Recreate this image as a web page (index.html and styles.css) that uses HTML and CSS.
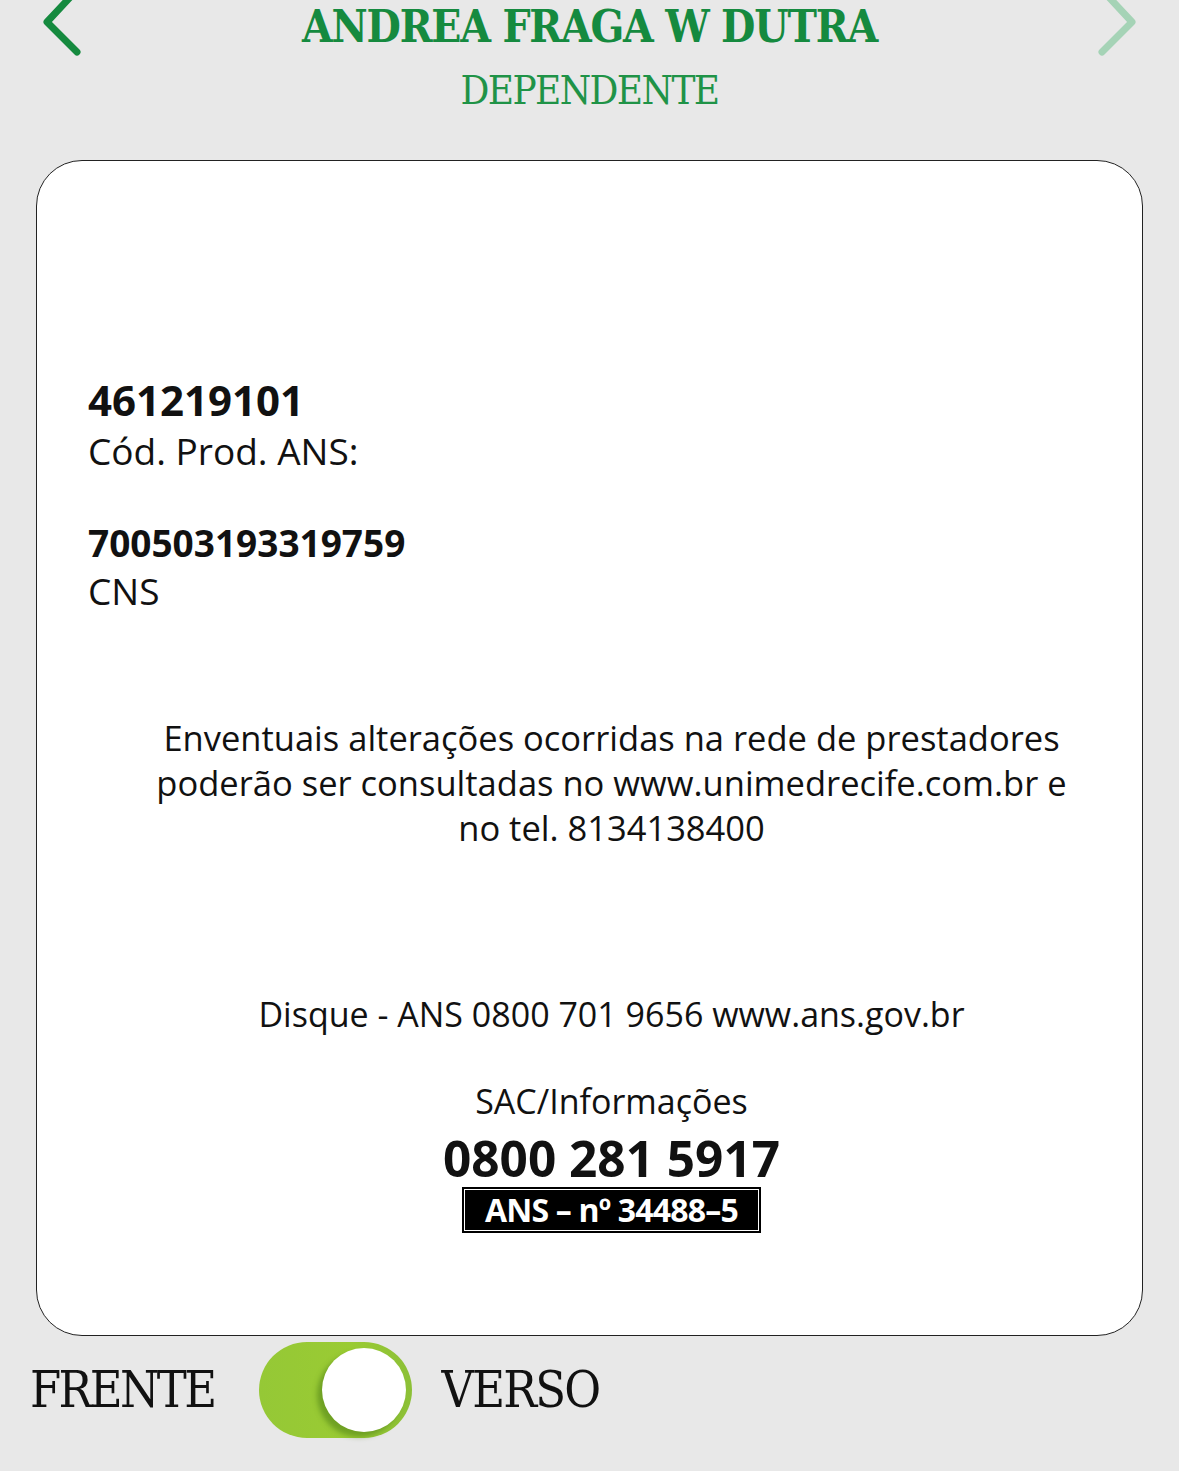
FILE: index.html
```html
<!DOCTYPE html>
<html lang="pt">
<head>
<meta charset="utf-8">
<link rel="stylesheet" href="styles.css">
</head>
<body>
<div class="screen">
  <header class="header">
    <svg class="chev chev-left" width="50" height="70" viewBox="0 0 50 70"><polyline points="35,0 7,30 37,60" fill="none" stroke="#158a3f" stroke-width="7" stroke-linecap="round" stroke-linejoin="round"/></svg>
    <div class="who">
      <h1 class="name">ANDREA FRAGA W DUTRA</h1>
      <div class="role">DEPENDENTE</div>
    </div>
    <svg class="chev chev-right" width="50" height="70" viewBox="0 0 50 70"><polyline points="15,0 43,30 13,60" fill="none" stroke="#a5d3b6" stroke-width="7" stroke-linecap="round" stroke-linejoin="round"/></svg>
  </header>

  <section class="card">
    <div class="field first">
      <div class="val big">461219101</div>
      <div class="lbl">Cód. Prod. ANS:</div>
    </div>
    <div class="field second">
      <div class="val">700503193319759</div>
      <div class="lbl">CNS</div>
    </div>
    <p class="notice">Enventuais alterações ocorridas na rede de prestadores poderão ser consultadas no www.unimedrecife.com.br e no tel. 8134138400</p>
    <p class="disque">Disque - ANS 0800 701 9656 www.ans.gov.br</p>
    <div class="sac">
      <div class="sac-lbl">SAC/Informações</div>
      <div class="sac-num">0800 281 5917</div>
      <div class="ans-box"><span>ANS – nº 34488–5</span></div>
    </div>
  </section>

  <div class="switch-row">
    <span class="side">FRENTE</span>
    <div class="toggle"><div class="knob"></div></div>
    <span class="side">VERSO</span>
  </div>
</div>
</body>
</html>
```

FILE: styles.css
```css
html, body {
  margin: 0;
  padding: 0;
  background: #e8e8e8;
}
.screen {
  width: 1179px;
  height: 1471px;
  overflow: hidden;
}
.header {
  display: flex;
  justify-content: space-between;
  align-items: flex-start;
  height: 160px;
}
.chev {
  margin-top: -8px;
}
.chev-left { margin-left: 40px; }
.chev-right { margin-right: 40px; }
.who {
  display: flex;
  flex-direction: column;
  align-items: center;
  font-family: "DejaVu Serif Condensed", "DejaVu Serif", serif;
  color: #158a3f;
}
.name {
  margin: 0;
  font-size: 44px;
  font-weight: bold;
  line-height: 54px;
  letter-spacing: -1.2px;
}
.role {
  margin-top: 12px;
  font-size: 40px;
  line-height: 48px;
  font-weight: normal;
  letter-spacing: -1.6px;
  color: #1f9347;
}
.card {
  box-sizing: border-box;
  margin: 0 36px;
  height: 1176px;
  background: #fff;
  border: 1.5px solid #222;
  border-radius: 46px;
  font-family: "Open Sans", sans-serif;
  color: #111;
  display: flex;
  flex-direction: column;
  padding: 0 7px 0 51px;
}
.field.first { margin-top: 212px; }
.field.second { margin-top: 44px; }
.val {
  font-weight: bold;
  font-size: 37px;
  line-height: 48px;
}
.val.big { font-size: 42px; line-height: 54px; }
.lbl {
  font-size: 37px;
  line-height: 48px;
}
.notice {
  align-self: center;
  max-width: 935px;
  margin: 100px 0 0 0;
  text-align: center;
  font-size: 34.5px;
  line-height: 45px;
}
.disque {
  align-self: center;
  margin: 142px 0 0 0;
  text-align: center;
  font-size: 34px;
  line-height: 45px;
}
.sac {
  margin-top: 46px;
  display: flex;
  flex-direction: column;
  align-items: center;
}
.sac-lbl { font-size: 34px; line-height: 36px; }
.sac-num {
  margin-top: 14px;
  font-size: 49.5px;
  font-weight: bold;
  line-height: 50px;
}
.ans-box {
  margin-top: 4px;
  background: #000;
  width: 299px;
  height: 46px;
  box-sizing: border-box;
  border: 2px solid #000;
  display: flex;
}
.ans-box span {
  flex: 1;
  border: 1.5px solid #fff;
  color: #fff;
  font-weight: bold;
  font-size: 32px;
  line-height: 38px;
  display: flex;
  align-items: center;
  justify-content: center;
  letter-spacing: -0.8px;
}
.switch-row {
  display: flex;
  align-items: center;
  margin-top: 6px;
  padding-left: 30px;
  font-family: "DejaVu Serif Condensed", "DejaVu Serif", serif;
}
.side {
  font-size: 50px;
  letter-spacing: -2.6px;
  color: #111;
}
.side + .toggle + .side { letter-spacing: -1.8px; }
.toggle {
  margin: 0 30px 0 44px;
  width: 153px;
  height: 96px;
  border-radius: 48px;
  background: linear-gradient(90deg, #95c836 0%, #9acb33 60%, #8cc037 100%);
  position: relative;
}
.knob {
  position: absolute;
  right: 6px;
  top: 6px;
  width: 84px;
  height: 84px;
  border-radius: 50%;
  background: #fff;
  box-shadow: -5px 5px 5px rgba(70, 120, 20, 0.5);
}
```
